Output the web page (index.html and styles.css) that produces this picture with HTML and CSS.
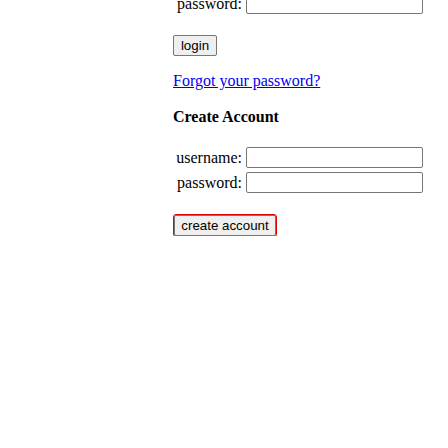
FILE: index.html
```html
<!DOCTYPE html>
<html>
<head>
<meta charset="utf-8">
<link rel="stylesheet" href="styles.css">
</head>
<body>
<div class="page">
  <form class="login">
    <div class="fields top-fields">
      <label class="label" for="lp">password:</label>
      <input class="field" id="lp" type="password">
    </div>
    <button class="btn btn-login" type="button">login</button>
  </form>
  <a class="forgot" href="#">Forgot your password?</a>
  <h4 class="heading">Create Account</h4>
  <form class="create">
    <div class="fields">
      <label class="label" for="cu">username:</label>
      <input class="field" id="cu" type="text">
      <label class="label" for="cp">password:</label>
      <input class="field" id="cp" type="password">
    </div>
    <button class="btn btn-create" type="button">create account</button>
  </form>
</div>
</body>
</html>
```

FILE: styles.css
```css
html, body {
  margin: 0;
  padding: 0;
  background: #ffffff;
}
body {
  font-family: "Liberation Serif", "Times New Roman", serif;
  font-size: 16px;
  color: #000000;
}
.page {
  padding-left: 173px;
  display: flex;
  flex-direction: column;
  align-items: flex-start;
}
.login, .create {
  display: flex;
  flex-direction: column;
  align-items: flex-start;
  margin: 0;
}
.fields {
  display: grid;
  grid-template-columns: 69px 177px;
  column-gap: 4px;
  row-gap: 4px;
  align-items: center;
}
.top-fields {
  margin-top: -7px;
}
.label {
  text-align: right;
  line-height: 18px;
}
.field {
  box-sizing: border-box;
  width: 177px;
  height: 21px;
  margin: 0;
  padding: 1px 2px;
  border: 1px solid #767676;
  border-radius: 2px;
  background: #ffffff;
  font-family: "Liberation Sans", Arial, sans-serif;
  font-size: 13.33px;
}
.btn {
  box-sizing: border-box;
  height: 21px;
  margin: 0;
  padding: 1px 6px;
  border: 1px solid #767676;
  border-radius: 2px;
  background: #efefef;
  color: #000000;
  font-family: "Liberation Sans", Arial, sans-serif;
  font-size: 13.33px;
  line-height: 15px;
}
.btn-login {
  margin-top: 21px;
  width: 44px;
}
.forgot {
  margin-top: 16px;
  line-height: 18px;
  color: #0000ee;
  text-decoration: underline;
}
.heading {
  margin: 18px 0 0 0;
  font-size: 16px;
  font-weight: bold;
  line-height: 18px;
}
.create .fields {
  margin-top: 21px;
}
.btn-create {
  margin-top: 22px;
  margin-left: 1px;
  width: 102px;
  outline: 1px solid #e00000;
}
```
